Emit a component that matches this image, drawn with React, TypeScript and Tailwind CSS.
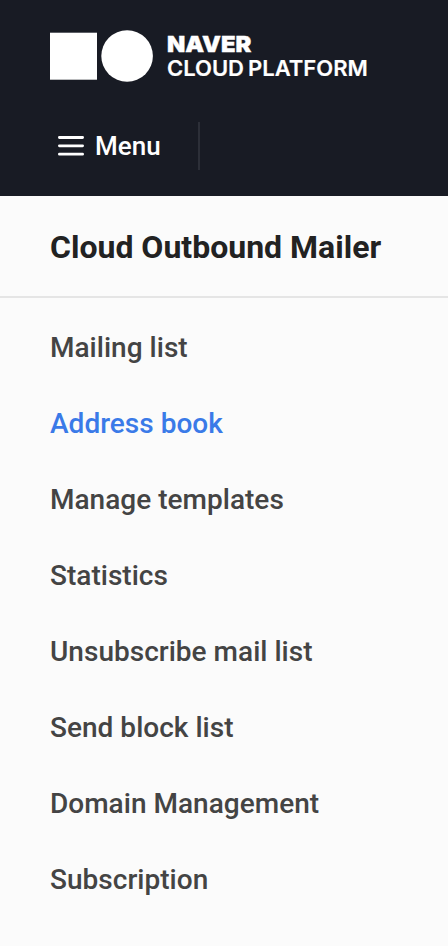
import React from "react";
import clsx from "clsx";

interface MenuItem {
  label: string;
  active?: boolean;
}

const menuItems: MenuItem[] = [
  { label: "Mailing list" },
  { label: "Address book", active: true },
  { label: "Manage templates" },
  { label: "Statistics" },
  { label: "Unsubscribe mail list" },
  { label: "Send block list" },
  { label: "Domain Management" },
  { label: "Subscription" },
];

const Logo: React.FC = () => (
  <div className="flex h-[52px] items-center pl-[50px]">
    <svg width="104" height="52" viewBox="0 0 104 52" fill="#fff" className="shrink-0">
      <rect x="0" y="2.7" width="47" height="47" />
      <circle cx="77.1" cy="26" r="25.8" />
    </svg>
    <div className="ml-[13px] font-['Inter',sans-serif] text-[22px] text-white whitespace-nowrap">
      <div className="origin-left scale-x-[1.08] leading-[24px] font-black [-webkit-text-stroke:0.4px_#fff]">
        NAVER
      </div>
      <div className="leading-[25px] font-semibold [word-spacing:-1.5px] [-webkit-text-stroke:0.2px_#fff]">
        CLOUD PLATFORM
      </div>
    </div>
  </div>
);

const App: React.FC = () => {
  return (
    <div className="min-h-screen bg-[#fbfbfb] font-['Roboto',sans-serif]">
      <header className="h-[196px] bg-[#181b24] pt-[30px]">
        <Logo />
        <div className="mt-10 flex h-12 items-center">
          <button className="flex h-12 w-[200px] items-center border-r-2 border-[#2c2f38] pl-[58px] text-white">
            <svg width="26" height="20" viewBox="0 0 26 20" stroke="#fff" strokeWidth="2.8" strokeLinecap="round">
              <path d="M1.4 1.5h23.2M1.4 9.8h23.2M1.4 18.2h23.2" />
            </svg>
            <span className="ml-[11px] text-[26px] font-medium">Menu</span>
          </button>
        </div>
      </header>

      <h1 className="flex h-[102px] items-center border-b-2 border-[#e5e5e5] pt-[2px] pl-[50px] text-[32px] font-bold text-[#222]">
        Cloud Outbound Mailer
      </h1>

      <nav className="pt-3">
        <ul>
          {menuItems.map((item) => (
            <li key={item.label}>
              <a
                href="#"
                className={clsx(
                  "flex h-[76px] items-center pl-[50px] text-[28px] font-medium tracking-[0.02px]",
                  item.active ? "text-[#3a7ae8]" : "text-[#444]"
                )}
              >
                {item.label}
              </a>
            </li>
          ))}
        </ul>
      </nav>
    </div>
  );
};

export default App;
